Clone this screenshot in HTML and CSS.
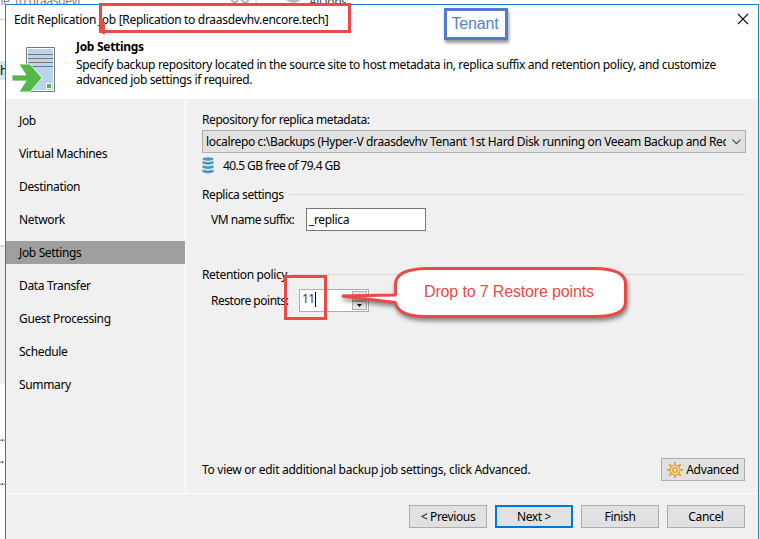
FILE: index.html
```html
<!DOCTYPE html>
<html lang="en">
<head>
<meta charset="utf-8">
<title>Edit Replication Job</title>
<link rel="stylesheet" href="styles.css">
</head>
<body>
<div class="desktop">
  <div class="backdrop">
    <span class="bg-path">ne&nbsp; to draasdevhv from encore</span>
    <svg class="bg-marks" width="180" height="4" viewBox="0 0 180 4"><path d="M61 0l4 3 3-3M71 0l4 3 4-3" stroke="#b5b5b5" stroke-width="2" fill="none"/><path d="M116 0h15q-7 6-15 0" fill="#b9b9b9"/><path d="M86 0v4" stroke="#ccc"/></svg>
    <span class="bg-tab">All jobs</span>
    <div class="bg-rule"></div>
    <div class="bg-row">h</div>
    <div class="bg-panel"></div>
    <div class="bg-dots"><span>...</span><span>..</span><span>...</span></div>
  </div>
  <div class="dialog">
    <div class="titlebar">
      <span class="title">Edit Replication Job [Replication to draasdevhv.encore.tech]</span>
      <svg class="close" width="12" height="12" viewBox="0 0 12 12"><path d="M1 1l10 10M11 1L1 11" stroke="#111" stroke-width="1.1"/></svg>
    </div>
    <div class="header">
      <svg class="server" width="46" height="48" viewBox="0 0 46 48">
        <path d="M14.500.5h28v44h-28z" fill="#fff" stroke="#777"/>
        <path d="M16 2h25v41H16z" fill="#bad4ee"/>
        <path d="M16 7.500h25M16 11.500h25M16 15.500h25M16 19.500h25" stroke="#777"/>
        <path d="M34 36h6v6h-6z" fill="#fff"/><path d="M35 37h4v4h-4z" fill="#4fb848"/>
        <path d="M0 28h14l-7-11h11l12 14-12 14H7l7-11H0z" fill="#55b748" stroke="#fff" stroke-width=".8"/>
      </svg>
      <div class="header-text">
        <h1>Job Settings</h1>
        <p>Specify backup repository located in the source site to host metadata in, replica suffix and retention policy, and customize<br>advanced job settings if required.</p>
      </div>
    </div>
    <div class="body">
      <nav class="steps">
        <a>Job</a><a>Virtual Machines</a><a>Destination</a><a>Network</a><a class="active">Job Settings</a><a>Data Transfer</a><a>Guest Processing</a><a>Schedule</a><a>Summary</a>
      </nav>
      <main class="content">
        <label class="repo-label">Repository for replica metadata:</label>
        <div class="select"><span>localrepo c:\Backups (Hyper-V draasdevhv Tenant 1st Hard Disk running on Veeam Backup and Recovery)</span>
          <svg width="9" height="6" viewBox="0 0 9 6"><path d="M.5.7l4 4 4-4" fill="none" stroke="#444" stroke-width="1.1"/></svg></div>
        <div class="capacity">
          <svg width="12" height="17" viewBox="0 0 12 17"><g fill="#4698cb"><ellipse cx="6" cy="2" rx="5.500" ry="1.700"/><path d="M.5 4q5.500 2 11 0v2.500q-5.500 2.400-11 0zM.5 8.300q5.500 2 11 0v2.500q-5.500 2.400-11 0zM.5 12.600q5.500 2 11 0v2.500q-5.500 2.400-11 0z"/></g></svg>
          <span>40.5 GB free of 79.4 GB</span>
        </div>
        <div class="group replica"><span>Replica settings</span><i></i></div>
        <div class="field suffix"><label>VM name suffix:</label><div class="input">_replica</div></div>
        <div class="group retention"><span>Retention policy</span><i></i></div>
        <div class="field restore"><label>Restore points:</label>
          <div class="spinner"><span class="num">11</span><b class="caret"></b><div class="arrows"><span><svg width="5" height="3"><path d="M0 3h5L2.500 0z"/></svg></span><span><svg width="5" height="3"><path d="M0 0h5L2.500 3z"/></svg></span></div></div>
        </div>
        <div class="hint">
          <span>To view or edit additional backup job settings, click Advanced.</span>
          <div class="button advanced">
            <svg width="16" height="16" viewBox="0 0 16 16" fill="none" stroke="#e3a93b"><circle cx="8" cy="8" r="4.900" stroke-width="1.300"/><circle cx="8" cy="8" r="2.300" stroke-width="1.600"/><path d="M8 0v3M8 13v3M0 8h3M13 8h3M2.200 2.200l2.300 2.300M11.500 11.500l2.300 2.300M13.800 2.200l-2.300 2.300M4.500 11.500l-2.300 2.300" stroke-width="2"/></svg>
            <span>Advanced</span>
          </div>
        </div>
      </main>
    </div>
    <footer class="footer">
      <div class="button">&lt; Previous</div><div class="button primary">Next &gt;</div><div class="button">Finish</div><div class="button">Cancel</div>
    </footer>
  </div>
  <div class="mark mark-title"></div>
  <div class="mark-tail"></div>
  <div class="mark mark-points"></div>
  <div class="note">Tenant</div>
  <svg class="callout" width="300" height="70" viewBox="0 0 300 70">
    <path d="M57.500 35V25Q57.500 13 74 10Q80 8.500 88 8.500H256Q287.500 8.500 287.500 24V42Q287.500 56.500 256 56.500H86Q60 56 57.500 42.500L14 36.500z" fill="#fff"/>
    <path d="M4 36L57.500 35V25Q57.500 13 74 10Q80 8.500 88 8.500H256Q287.500 8.500 287.500 24V42Q287.500 56.500 256 56.500H86Q60 56 57.500 42.500L4 36" fill="none" stroke="#ea4a46" stroke-width="3" stroke-linejoin="bevel"/>
  </svg>
  <div class="callout-text">Drop to 7 Restore points</div>
</div>
</body>
</html>
```
FILE: styles.css
```css
* { box-sizing: border-box; }
body { margin: 0; font: 12px/15px "Noto Sans", "Open Sans", sans-serif; letter-spacing: -0.35px; color: #000; }
svg { display: block; flex: none; }
.desktop { position: relative; width: 760px; height: 539px; overflow: hidden; background: #fff; }
.backdrop { position: absolute; inset: 0; }
.bg-path { position: absolute; left: -4px; top: -7px; width: 84px; height: 18px; overflow: hidden; color: #8a7a70; white-space: nowrap; }
.bg-marks { position: absolute; left: 170px; top: 0; }
.bg-tab { position: absolute; left: 309px; top: -6px; color: #444; }
.bg-rule { position: absolute; top: 19px; width: 6px; height: 1px; background: #ccc; }
.bg-row { position: absolute; top: 61px; width: 6px; height: 19px; background: #d0e5f8; line-height: 19px; }
.bg-panel { position: absolute; top: 245px; width: 6px; height: 139px; border-top: 2px solid #ddd; background: #f0f0f0; }
.bg-dots { position: absolute; left: -2px; top: 429px; display: grid; gap: 7px; }
.dialog { position: relative; margin: 4px 1px 0 5px; height: 545px; display: flex; flex-direction: column; border: 1px solid #1b7fd0; background: #f0f0f0; }
.titlebar { display: flex; justify-content: space-between; height: 31px; padding: 7px 9px 0 8px; background: #fff; }
.title { letter-spacing: -0.31px; }
.close { margin-top: 1px; }
.header { display: flex; height: 63px; padding-left: 6px; background: #fff; }
.server { margin-top: 11px; }
.header-text { margin: 3px 0 0 18px; }
.header h1 { margin: 0 0 3px; font-size: 12px; line-height: 15px; letter-spacing: -0.3px; }
.header p { margin: 0; white-space: nowrap; }
.body { display: flex; height: 395px; border-bottom: 1px solid #fff; }
.steps { display: flex; flex-direction: column; gap: 10px; width: 180px; padding-top: 10px; border-right: 1px solid #fff; }
.steps a { height: 23px; padding-left: 13px; line-height: 23px; }
.steps .active { background: #9f9f9f; }
.content { display: flex; flex-direction: column; width: 560px; padding: 13px 0 0 16px; }
.repo-label { letter-spacing: -0.42px; }
.select { display: flex; align-items: center; justify-content: space-between; width: 544px; height: 23px; margin-top: 3px; padding: 0 4px 0 3px; border: 1px solid #adadad; background: #e1e1e1; }
.select span { width: 520px; overflow: hidden; white-space: nowrap; letter-spacing: -0.36px; }
.capacity { display: flex; align-items: center; gap: 9px; height: 17px; margin-top: 4px; letter-spacing: -0.57px; }
.group { display: flex; align-items: center; gap: 5px; width: 544px; height: 15px; }
.group i { flex: 1; height: 1px; background: #dcdcdc; }
.replica { margin-top: 13px; letter-spacing: -0.42px; }
.retention { margin-top: 36px; }
.field { display: flex; align-items: center; padding-left: 9px; }
.field label { white-space: nowrap; letter-spacing: -0.48px; }
.suffix { margin-top: 6px; }
.suffix label { width: 95px; }
.input { width: 120px; height: 23px; padding: 3px 2px; border: 1px solid #777; background: #fff; }
.restore { margin-top: 7px; }
.restore label { width: 88px; }
.spinner { display: flex; width: 70px; height: 23px; padding: 1px; border: 1px solid #abadb3; background: #fff; }
.num { color: #5c1a68; padding: 0 0 0 1px; letter-spacing: -0.6px; }
.caret { width: 1px; height: 15px; margin-top: 1px; background: #000; }
.arrows { display: grid; width: 15px; margin-left: auto; }
.arrows span { display: grid; place-items: center; border: 1px solid #adadad; background: #e5e5e5; }
.hint { display: flex; align-items: center; justify-content: space-between; width: 543px; margin-top: 146px; letter-spacing: -0.28px; }
.button { display: flex; align-items: center; justify-content: center; width: 78px; height: 23px; border: 1px solid #adadad; background: #e1e1e1; white-space: nowrap; }
.advanced { width: 84px; gap: 3px; letter-spacing: -0.35px; }
.primary { border: 2px solid #0078d7; }
.footer { display: flex; justify-content: flex-end; gap: 8px; padding: 11px 13px 0 0; }
.mark { position: absolute; border: 3px solid #ea4a46; }
.mark-title { left: 99px; top: 3px; width: 252px; height: 30px; }
.mark-tail { position: absolute; left: 102px; top: 22px; width: 3px; height: 12px; background: #ea4a46; }
.mark-points { left: 284px; top: 275px; width: 43px; height: 45px; }
.note { position: absolute; left: 444px; top: 8px; width: 64px; height: 32px; border: 3px solid #4f7ccb; background: #fff; box-shadow: 1px 3px 3px rgba(0,0,0,.4); color: #5480cd; font: 16px/25px "Liberation Sans", sans-serif; letter-spacing: -0.15px; padding-right: 2px; text-align: center; }
.callout { position: absolute; left: 338px; top: 260px; filter: drop-shadow(1px 3px 2px rgba(0,0,0,.45)); }
.callout-text { position: absolute; left: 424px; top: 282px; font: 16px/19px "Liberation Sans", sans-serif; letter-spacing: -0.15px; color: #ea4a46; white-space: nowrap; }
```
